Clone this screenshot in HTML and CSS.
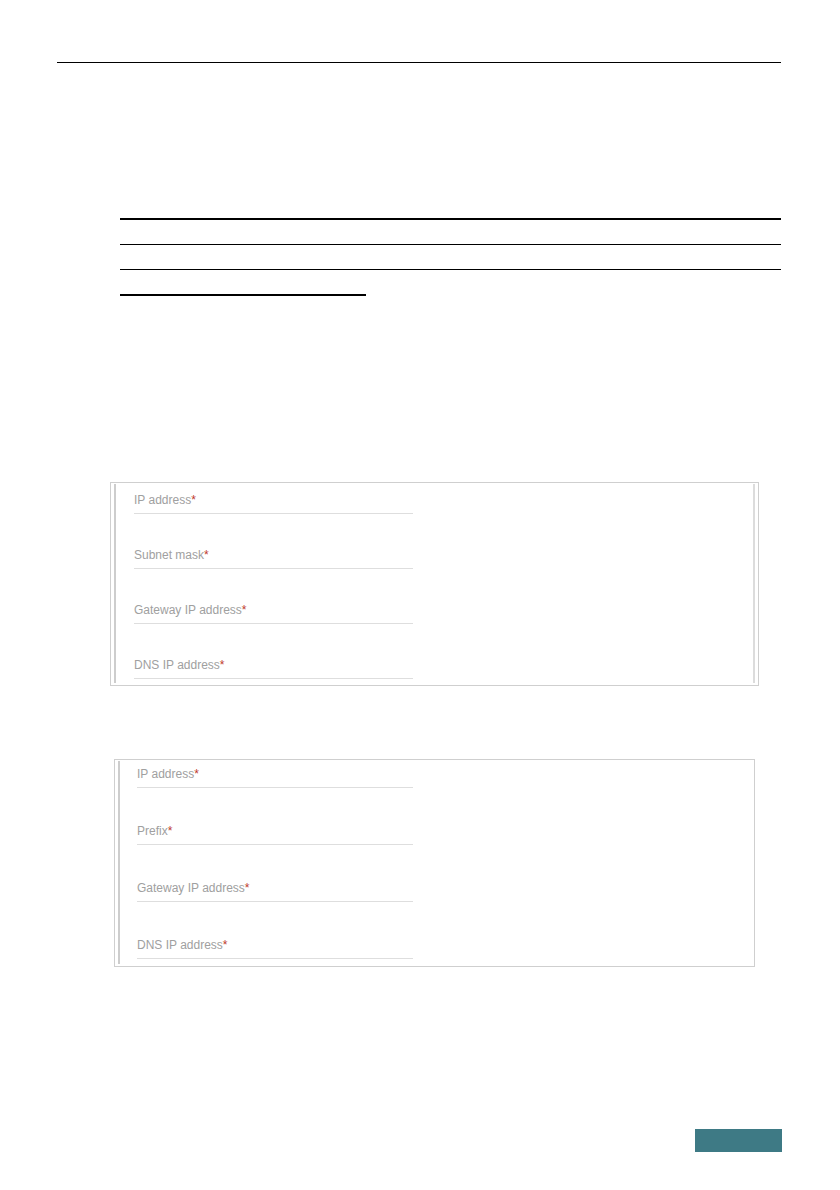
FILE: index.html
```html
<!DOCTYPE html>
<html lang="en">
<head>
    <meta charset="UTF-8">
    <meta name="viewport" content="width=device-width, initial-scale=1.0">
    <title>Static IP settings</title>
    <link rel="stylesheet" href="styles.css">
</head>
<body>
    <div class="page">
        <div class="header-rule"></div>

        <div class="table">
            <div class="table-row"></div>
            <div class="table-row"></div>
            <div class="table-row"></div>
        </div>
        <div class="table-end"></div>

        <!-- IPv4 static settings -->
        <div class="panel panel-v4">
            <div class="panel-bar"></div>
            <div class="fields">
                <div class="field"><span class="label">IP address</span><span class="req">*</span></div>
                <div class="field"><span class="label">Subnet mask</span><span class="req">*</span></div>
                <div class="field"><span class="label">Gateway IP address</span><span class="req">*</span></div>
                <div class="field"><span class="label">DNS IP address</span><span class="req">*</span></div>
            </div>
            <div class="panel-scroll"></div>
        </div>

        <!-- IPv6 static settings -->
        <div class="panel panel-v6">
            <div class="panel-bar"></div>
            <div class="fields">
                <div class="field"><span class="label">IP address</span><span class="req">*</span></div>
                <div class="field"><span class="label">Prefix</span><span class="req">*</span></div>
                <div class="field"><span class="label">Gateway IP address</span><span class="req">*</span></div>
                <div class="field"><span class="label">DNS IP address</span><span class="req">*</span></div>
            </div>
        </div>

        <div class="page-tab"></div>
    </div>
</body>
</html>
```

FILE: styles.css
```css
body {
    margin: 0;
    background-color: #fff;
    font-family: "Liberation Sans", Arial, sans-serif;
}
.page {
    width: 840px;
    height: 1190px;
    overflow: hidden;
}
.header-rule {
    margin: 62px 0 0 57px;
    width: 724px;
    border-top: 1px solid #000;
}
.table {
    margin: 155px 0 0 120px;
    width: 661px;
    border-top: 2px solid #000;
}
.table-row {
    height: 24px;
    border-bottom: 1px solid #000;
}
.table-row:last-child {
    border-bottom: none;
}
.table-end {
    margin-left: 120px;
    width: 246px;
    border-top: 2px solid #000;
}
.panel {
    display: flex;
    box-sizing: border-box;
    border: 1px solid #cfcfcf;
    background-color: #fff;
}
.panel-v4 {
    margin: 186px 0 0 110px;
    width: 649px;
    height: 204px;
}
.panel-v6 {
    margin: 73px 0 0 114px;
    width: 641px;
    height: 208px;
}
.panel-bar {
    width: 2px;
    margin: 1px 0 2px 3px;
    background-color: #cdcdcd;
}
.panel-scroll {
    width: 2px;
    margin: 1px 3px 2px auto;
    background-color: #dcdcdc;
}
.fields {
    display: flex;
    flex-direction: column;
}
.panel-v4 .fields {
    padding: 10px 0 0 18px;
    gap: 34px;
}
.panel-v6 .fields {
    padding: 7px 0 0 17px;
    gap: 36px;
}
.field {
    font-size: 12px;
    line-height: 14px;
    padding-bottom: 6px;
    border-bottom: 1px solid #dedede;
}
.panel-v4 .field {
    width: 279px;
}
.panel-v6 .field {
    width: 276px;
}
.label {
    color: #a0a0a0;
}
.req {
    color: #c0392b;
}
.page-tab {
    margin: 162px 0 0 695px;
    width: 87px;
    height: 23px;
    background-color: #3e7a85;
}
```
